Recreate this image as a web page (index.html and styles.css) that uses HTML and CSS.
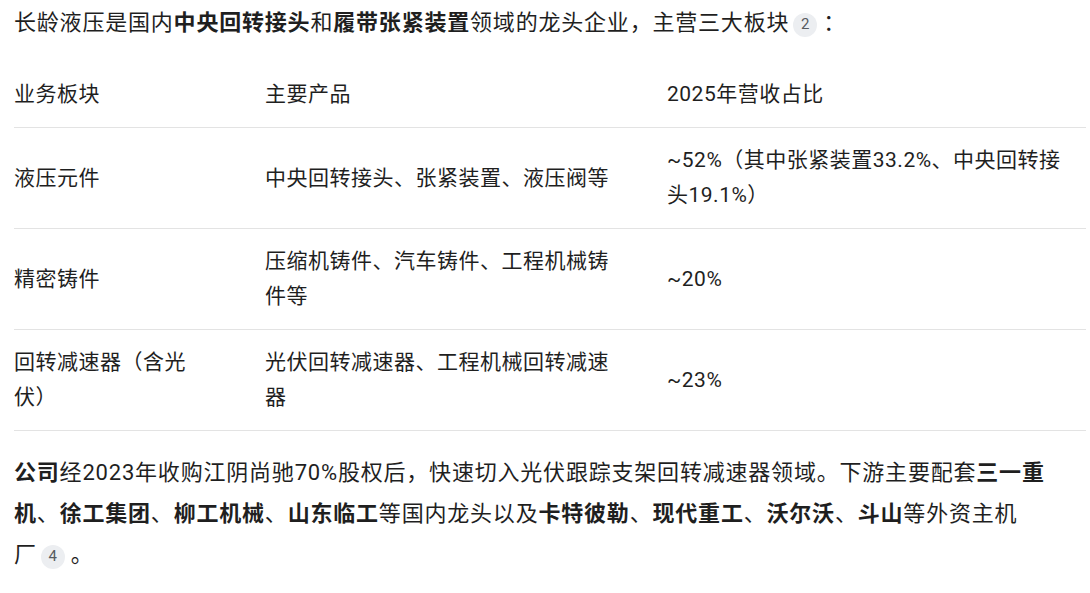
FILE: index.html
```html
<!DOCTYPE html>
<html lang="zh-CN">
<head>
<meta charset="utf-8">
<link rel="stylesheet" href="styles.css">
</head>
<body>
<div class="doc">
  <p class="lead">长龄液压是国内<b>中央回转接头</b>和<b>履带张紧装置</b>领域的龙头企业，主营三大板块<span class="cite">2</span>：</p>
  <table class="biz">
    <colgroup><col class="c1"><col class="c2"><col class="c3"></colgroup>
    <thead>
      <tr><th>业务板块</th><th>主要产品</th><th>2025年营收占比</th></tr>
    </thead>
    <tbody>
      <tr><td>液压元件</td><td>中央回转接头、张紧装置、液压阀等</td><td>~52%（其中张紧装置33.2%、中央回转接头19.1%）</td></tr>
      <tr><td>精密铸件</td><td>压缩机铸件、汽车铸件、工程机械铸件等</td><td>~20%</td></tr>
      <tr><td>回转减速器（含光伏）</td><td>光伏回转减速器、工程机械回转减速器</td><td>~23%</td></tr>
    </tbody>
  </table>
  <p class="body"><b>公司</b>经2023年收购江阴尚驰70%股权后，快速切入光伏跟踪支架回转减速器领域。下游主要配套<b>三一重机</b>、<b>徐工集团</b>、<b>柳工机械</b>、<b>山东临工</b>等国内龙头以及<b>卡特彼勒</b>、<b>现代重工</b>、<b>沃尔沃</b>、<b>斗山</b>等外资主机<span class="keep">厂<span class="cite">4</span>。</span></p>
</div>
</body>
</html>
```
FILE: styles.css
```css
html, body {
  margin: 0;
  padding: 0;
  background: #ffffff;
}
body {
  font-family: "Roboto", "Noto Sans CJK SC", sans-serif;
  color: #1f1f1f;
}
.doc {
  padding: 0 4px 0 14px;
  width: 1072px;
}
b { font-weight: 700; }
.lead {
  margin: 2px 0 0;
  font-size: 22px;
  line-height: 41px;
  letter-spacing: 0.8px;
}
.body {
  margin: 21px 0 0;
  font-size: 22px;
  line-height: 41px;
  letter-spacing: 0.8px;
  width: 1062px;
}
.keep { white-space: nowrap; }
.cite {
  display: inline-flex;
  align-items: center;
  justify-content: center;
  width: 24px;
  height: 24px;
  margin: 0 6px 0 4px;
  border-radius: 50%;
  background: #eceef1;
  color: #575b5f;
  font-size: 15px;
  letter-spacing: 0;
  line-height: 1;
  vertical-align: 1px;
}
.biz {
  margin-top: 19px;
  width: 1072px;
  border-collapse: collapse;
  table-layout: fixed;
  font-size: 21px;
  line-height: 35px;
  letter-spacing: 0.5px;
}
.c1 { width: 251px; }
.c2 { width: 402px; }
.biz th, .biz td {
  text-align: left;
  font-weight: 400;
  padding: 15px 0 15px 0;
  vertical-align: middle;
  border-bottom: 1px solid #e3e3e3;
}
.biz tr > :nth-child(1) { padding-right: 66px; }
.biz tr > :nth-child(2) { padding-right: 50px; }
.biz tr > :nth-child(3) { padding-right: 15px; }
.biz td { height: 70px; }
```
